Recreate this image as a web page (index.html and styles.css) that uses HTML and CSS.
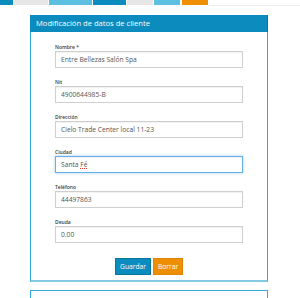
FILE: index.html
```html
<!DOCTYPE html>
<html lang="es">

<head>
  <meta charset="UTF-8" />
  <meta name="viewport" content="width=device-width, initial-scale=1.0" />
  <title>Clientes</title>
  <link rel="stylesheet" href="styles.css">
</head>

<body>
  <div class="topbar">
    <span class="tab blue w13"></span>
    <span class="tab gray w34"></span>
    <span class="tab light w43"></span>
    <span class="tab blue w33"></span>
    <span class="tab gray w26"></span>
    <span class="tab light w26"></span>
    <span class="tab orange w26 gap2"></span>
    <span class="fill"></span>
  </div>

  <div class="panel">
    <div class="panel-head">Modificación de datos de cliente</div>
    <form class="panel-body">
      <div class="field">
        <label>Nombre *</label>
        <input type="text" value="Entre Bellezas Salón Spa" />
      </div>
      <div class="field">
        <label>Nit</label>
        <input type="text" value="4900644985-B" />
      </div>
      <div class="field">
        <label>Dirección</label>
        <input type="text" value="Cielo Trade Center local 11-23" />
      </div>
      <div class="field">
        <label>Ciudad</label>
        <div class="input focus">Santa <span class="typo">Fé</span></div>
      </div>
      <div class="field">
        <label>Teléfono</label>
        <input type="text" value="44497863" />
      </div>
      <div class="field">
        <label>Deuda</label>
        <input type="text" value="0.00" />
      </div>
      <div class="actions">
        <button type="button" class="btn btn-save">Guardar</button>
        <button type="button" class="btn btn-clear">Borrar</button>
      </div>
    </form>
  </div>

  <div class="panel next"></div>
</body>

</html>
```

FILE: styles.css
```css
:root {
  --blue: #0b8bbe;
  --blue-dark: #08779f;
  --light: #5bbfdf;
  --gray: #e6e6e6;
  --orange: #ee8e03;
  --line: #30a9d5;
}

html,
body {
  margin: 0;
  padding: 0;
  background: #fff;
  font-family: "Open Sans", "Liberation Sans", sans-serif;
}

.topbar {
  display: flex;
  height: 6px;
}

.tab {
  height: 5px;
  margin-right: 1px;
}

.tab.blue { background: var(--blue); }
.tab.gray { background: var(--gray); }
.tab.light { background: var(--light); }
.tab.orange { background: var(--orange); }

.w13 { width: 13px; }
.w26 { width: 26px; }
.w33 { width: 33px; }
.w34 { width: 34px; }
.w43 { width: 43px; }
.gap2 { margin-left: 1px; }

.fill {
  flex: 1;
  height: 5px;
  border-bottom: 1px solid #ececec;
}

.panel {
  width: 236px;
  margin: 9px 0 0 30px;
  border: 1px solid var(--line);
  border-bottom: 2px solid #86cbe6;
}

.panel.next {
  margin-top: 8px;
  height: 20px;
  border-bottom: 0;
}

.panel-head {
  margin: -1px -1px 0;
  height: 17px;
  padding-left: 6px;
  background: var(--blue);
  border-right: 1px solid var(--blue-dark);
  color: #fff;
  font-size: 7.6px;
  line-height: 17px;
}

.panel-body {
  display: flex;
  flex-direction: column;
  align-items: center;
  padding: 12px 0 5px;
  margin: 0;
}

.field {
  width: 188px;
  margin-bottom: 11px;
}

.field label {
  display: block;
  height: 6px;
  margin-bottom: 1px;
  color: #3a3a3a;
  font-size: 5px;
  font-weight: 600;
  line-height: 6px;
}

.field input,
.field .input {
  display: block;
  box-sizing: border-box;
  width: 188px;
  height: 17px;
  margin: 0;
  padding: 0 5px;
  border: 1px solid #cfcfcf;
  background: #fff;
  box-shadow: inset 0 1px 1px rgba(0, 0, 0, 0.06);
  color: #555;
  font-family: inherit;
  font-size: 6.7px;
  line-height: 15px;
  outline: none;
}

.field .input.focus {
  border-color: #66afe9;
  box-shadow: inset 0 1px 1px rgba(0, 0, 0, 0.06), 0 0 3px rgba(102, 175, 233, 0.6);
}

.typo {
  text-decoration: underline dotted #d33;
  text-decoration-thickness: 1px;
}

.actions {
  display: flex;
  gap: 2px;
  margin-top: 4px;
}

.btn {
  height: 17px;
  margin: 0;
  padding: 0 4px;
  border: 1px solid;
  color: #fff;
  font-family: inherit;
  font-size: 6.7px;
  line-height: 15px;
}

.btn-save {
  width: 36px;
  background: var(--blue);
  border-color: var(--blue-dark);
}

.btn-clear {
  width: 30px;
  background: var(--orange);
  border-color: #e08500;
}
```
